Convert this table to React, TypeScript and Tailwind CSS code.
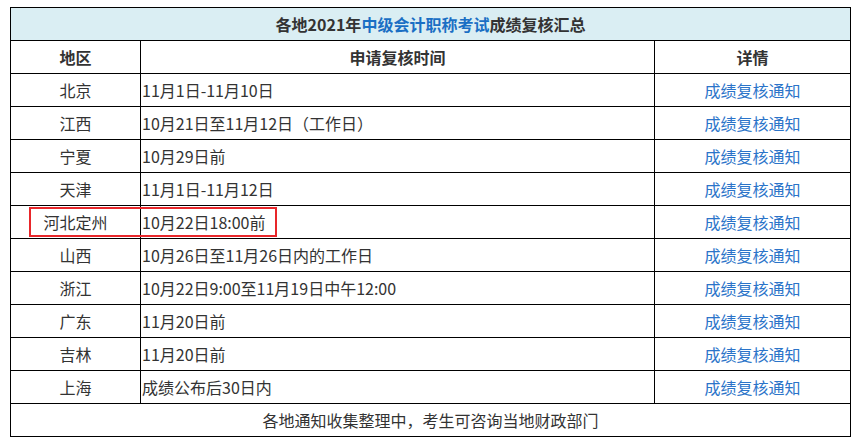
const rows = [
  { region: "北京", time: "11月1日-11月10日" },
  { region: "江西", time: "10月21日至11月12日（工作日）" },
  { region: "宁夏", time: "10月29日前" },
  { region: "天津", time: "11月1日-11月12日" },
  { region: "河北定州", time: "10月22日18:00前" },
  { region: "山西", time: "10月26日至11月26日内的工作日" },
  { region: "浙江", time: "10月22日9:00至11月19日中午12:00" },
  { region: "广东", time: "11月20日前" },
  { region: "吉林", time: "11月20日前" },
  { region: "上海", time: "成绩公布后30日内" },
];

const cell = "border border-black h-[33px] p-0";

export default function App() {
  return (
    <div
      className="relative w-[861px] h-[439px] bg-white pt-[7px] pl-[10px] text-[16px] text-[#333]"
      style={{ fontFamily: '"Microsoft YaHei", "Noto Sans CJK SC", sans-serif' }}
    >
      <table className="w-[840px] border-collapse table-fixed">
        <colgroup>
          <col className="w-[130px]" />
          <col className="w-[514px]" />
          <col className="w-[196px]" />
        </colgroup>
        <tbody>
          <tr>
            <td colSpan={3} className={`${cell} bg-[#daeef3] text-center font-bold`}>
              各地2021年<span className="text-[#1a6fc4]">中级会计职称考试</span>成绩复核汇总
            </td>
          </tr>
          <tr>
            <td className={`${cell} text-center font-bold`}>地区</td>
            <td className={`${cell} text-center font-bold`}>申请复核时间</td>
            <td className={`${cell} text-center font-bold`}>详情</td>
          </tr>
          {rows.map((r) => (
            <tr key={r.region}>
              <td className={`${cell} text-center`}>{r.region}</td>
              <td className={`${cell} pl-[1px] text-left`}>{r.time}</td>
              <td className={`${cell} text-center text-[#2b74c9]`}>成绩复核通知</td>
            </tr>
          ))}
          <tr>
            <td colSpan={3} className={`${cell} text-center`}>
              各地通知收集整理中，考生可咨询当地财政部门
            </td>
          </tr>
        </tbody>
      </table>
      {/* highlight box */}
      <div className="absolute left-[29px] top-[207px] w-[248px] h-[30px] border-2 border-[#e8262a]" />
    </div>
  );
}
